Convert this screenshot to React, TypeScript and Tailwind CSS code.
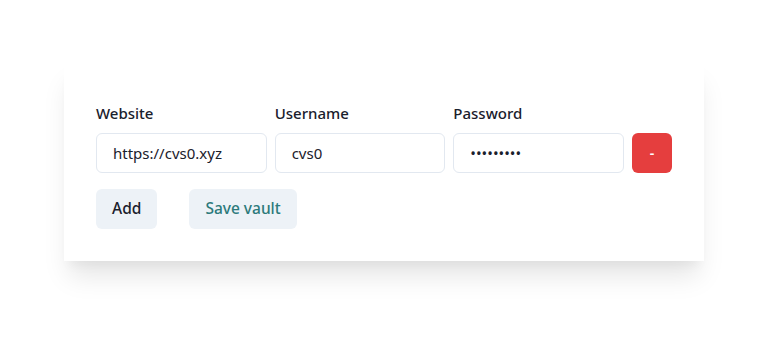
import React from 'react';

const fields = [
  { label: 'Website', value: 'https://cvs0.xyz', type: 'text' },
  { label: 'Username', value: 'cvs0', type: 'text' },
  { label: 'Password', value: 'abcdefghi', type: 'password' },
];

export default function App() {
  return (
    <div className="w-[778px] h-[351px] bg-white pt-[60px] pl-16 font-['Noto_Sans',sans-serif] text-[#1a202c]">
      {/* Vault card */}
      <div className="w-[640px] bg-white shadow-[0_20px_25px_-5px_rgba(0,0,0,0.1),0_10px_10px_-5px_rgba(0,0,0,0.04)] px-8 pt-10 pb-8">
        <div className="grid grid-cols-[1fr_1fr_1fr_40px] gap-x-2">
          {fields.map((f) => (
            <div key={f.label} className="text-[15px] font-medium leading-6 mt-px mb-2">
              {f.label}
            </div>
          ))}
          <div />
          {fields.map((f) => (
            <input
              key={f.label}
              type={f.type}
              defaultValue={f.value}
              className="h-10 w-full min-w-0 rounded-md border border-[#e2e8f0] px-4 text-[15px] text-[#1a202c] outline-none"
            />
          ))}
          <button className="h-10 w-10 rounded-md bg-[#e53e3e] text-white font-semibold text-sm flex items-center justify-center">
            -
          </button>
        </div>

        <div className="flex gap-8 mt-4">
          <button className="h-10 px-4 rounded-md bg-[#edf2f7] text-[15.5px] font-medium text-[#1a202c]">
            Add
          </button>
          <button className="h-10 px-4 rounded-md bg-[#edf2f7] text-[15.5px] font-medium text-[#2c7a7b]">
            Save vault
          </button>
        </div>
      </div>
    </div>
  );
}
